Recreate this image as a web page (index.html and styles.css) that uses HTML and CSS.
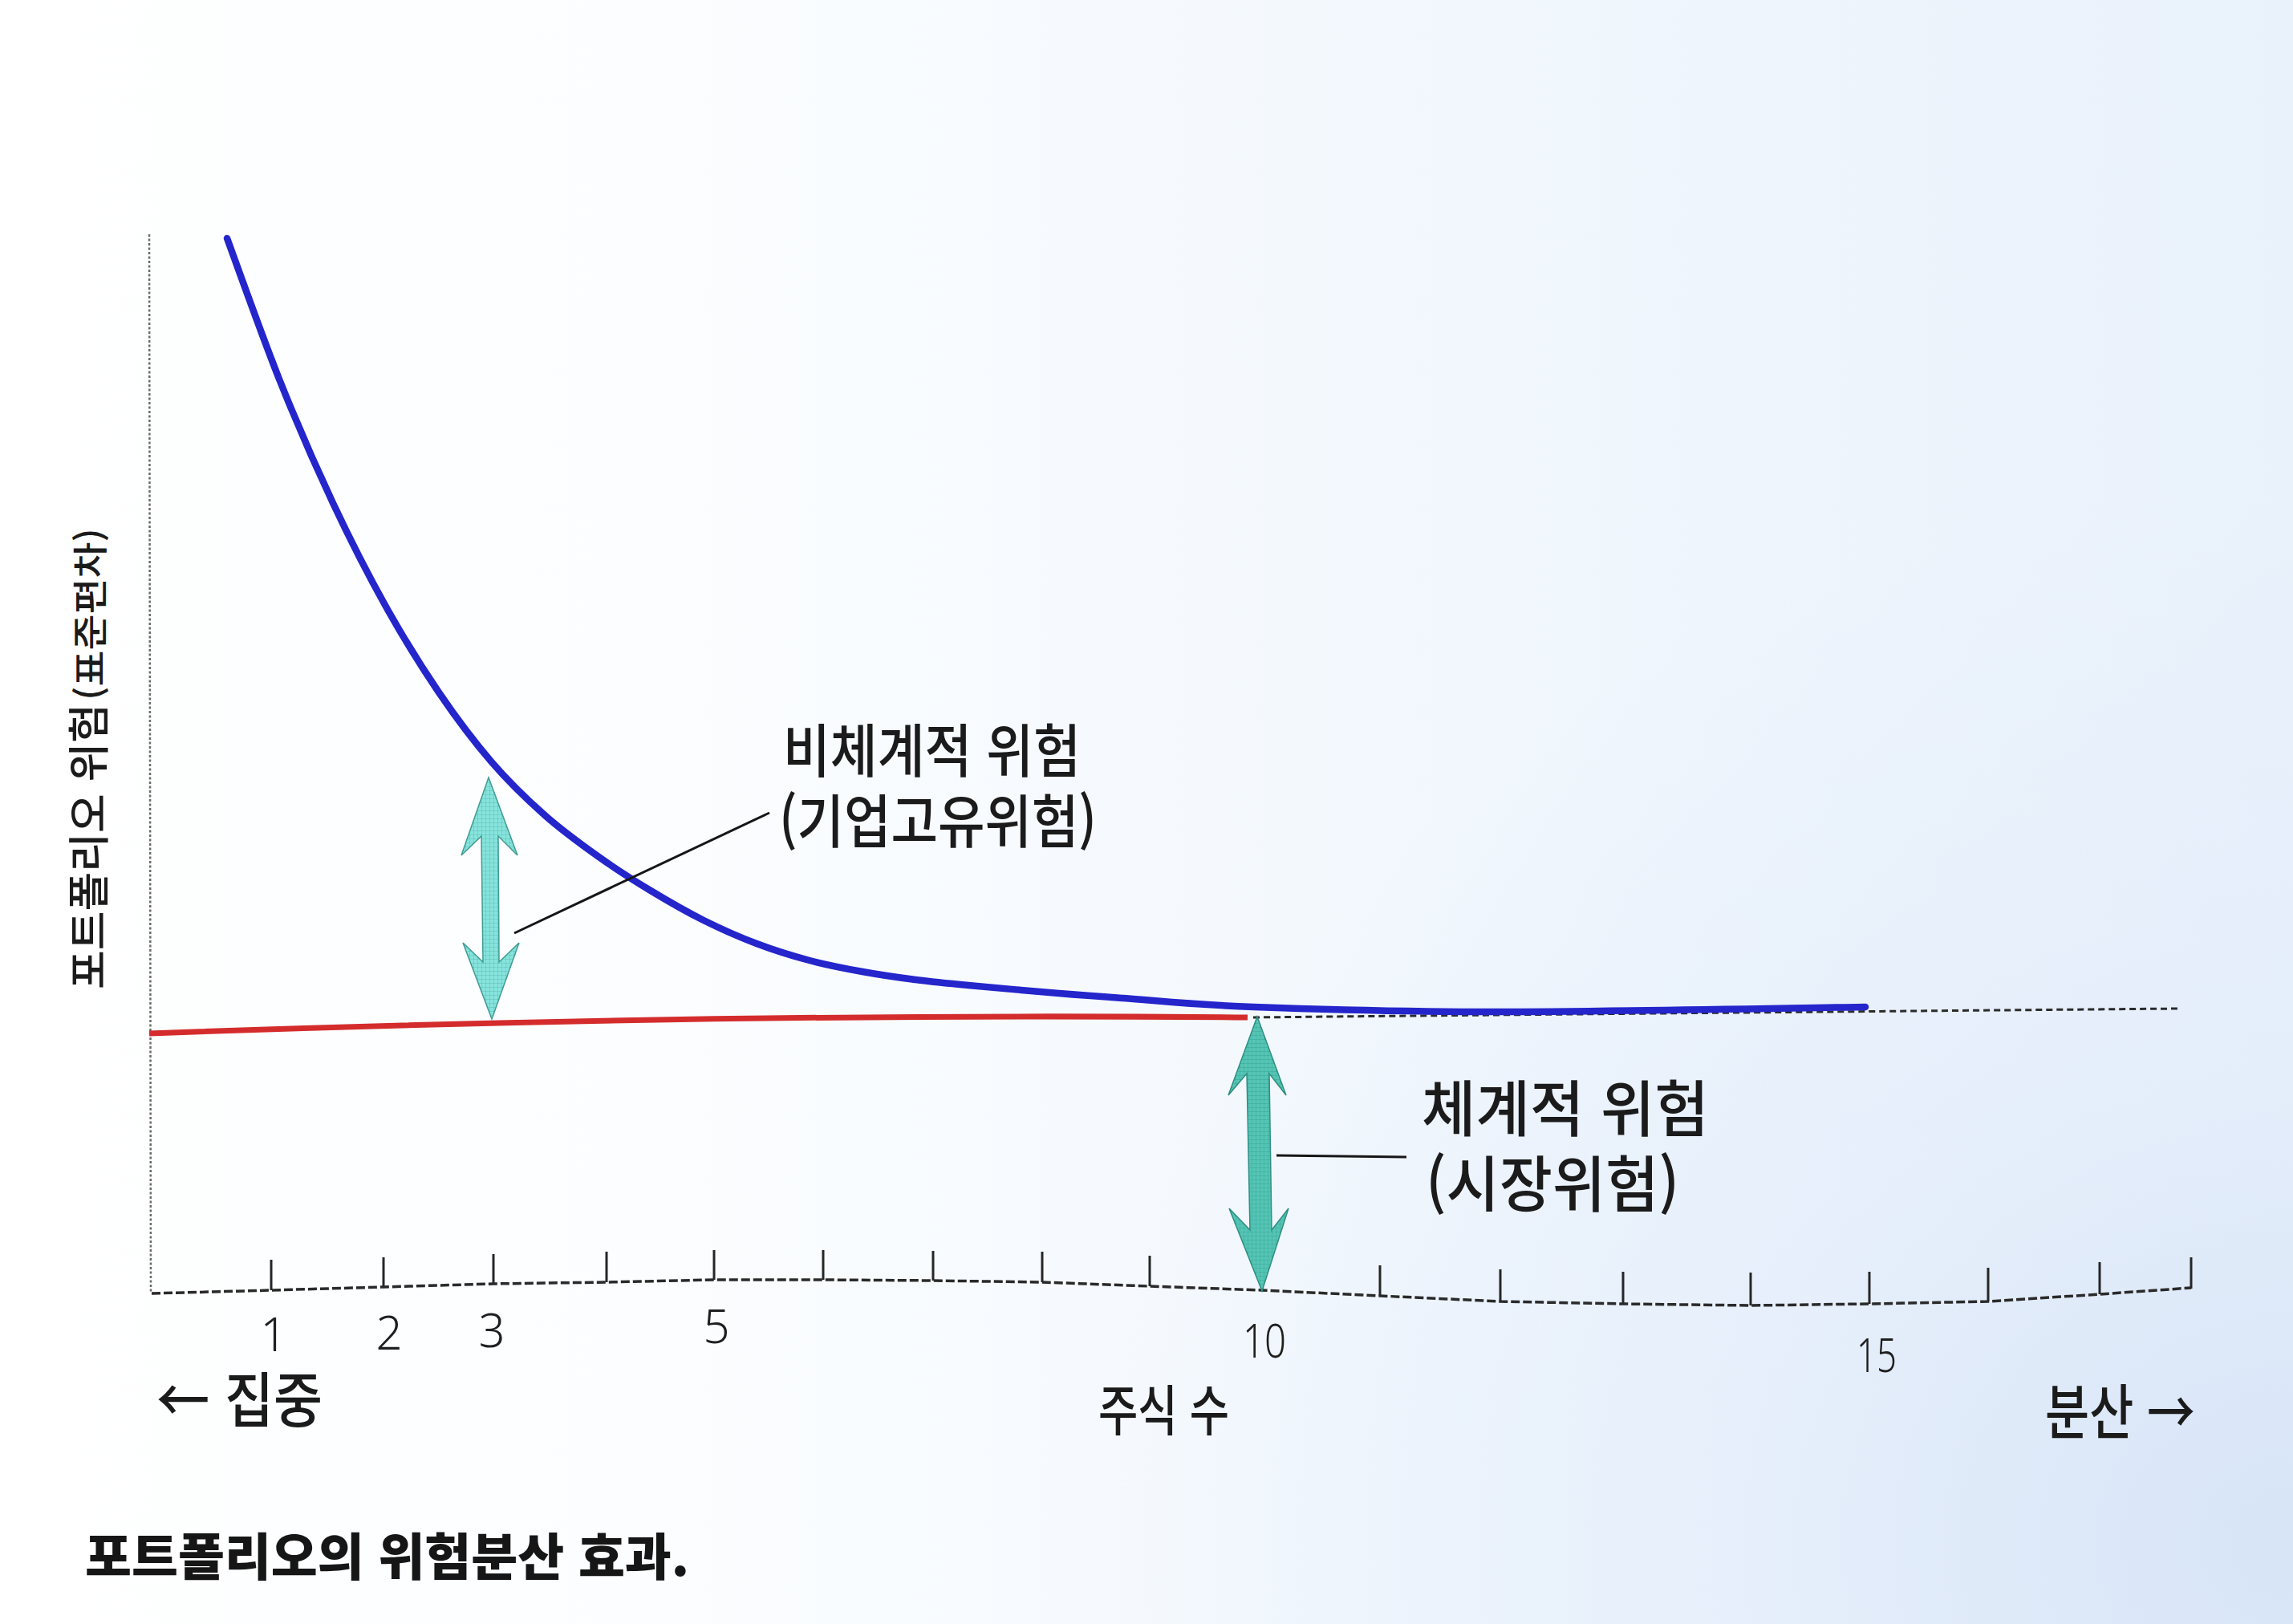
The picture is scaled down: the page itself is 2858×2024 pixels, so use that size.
FILE: index.html
```html
<!DOCTYPE html>
<html lang="ko">
<head>
<meta charset="utf-8">
<title>포트폴리오의 위험분산 효과</title>
<link rel="stylesheet" href="styles.css">
</head>
<body>
<main class="page">
  <figure class="figure">
    <svg class="chart" viewBox="0 0 2858 1880" width="2858" height="1880" xmlns="http://www.w3.org/2000/svg">
      <defs>
        <pattern id="hatchA" width="5" height="5" patternUnits="userSpaceOnUse">
          <rect width="5" height="5" fill="#86e4dc"/>
          <path d="M0 0V5M0 0H5" class="hatch-line"/>
        </pattern>
        <pattern id="hatchB" width="5" height="5" patternUnits="userSpaceOnUse">
          <rect width="5" height="5" fill="#55c6b6"/>
          <path d="M0 0V5M0 0H5" class="hatch-line-b"/>
        </pattern>
      </defs>

      <!-- vertical axis -->
      <line class="axis-y" x1="186" y1="292" x2="188" y2="1612"/>

      <!-- horizontal axis -->
      <polyline class="axis-x" points="189,1612 338,1608 478,1604 615,1600 756,1598 890,1595 1026,1595 1163,1596 1299,1598 1433,1603 1573,1608 1720,1615 1870,1622 2023,1625 2182,1627 2330,1625 2478,1622 2617,1613 2731,1605"/>

      <g class="ticks">
        <line x1="338" y1="1570" x2="338" y2="1608"/>
        <line x1="478" y1="1567" x2="478" y2="1604"/>
        <line x1="615" y1="1563" x2="615" y2="1600"/>
        <line x1="756" y1="1560" x2="756" y2="1598"/>
        <line x1="890" y1="1558" x2="890" y2="1595"/>
        <line x1="1026" y1="1558" x2="1026" y2="1595"/>
        <line x1="1163" y1="1559" x2="1163" y2="1596"/>
        <line x1="1299" y1="1560" x2="1299" y2="1598"/>
        <line x1="1433" y1="1565" x2="1433" y2="1603"/>
        <line x1="1573" y1="1570" x2="1573" y2="1608"/>
        <line x1="1720" y1="1577" x2="1720" y2="1615"/>
        <line x1="1870" y1="1582" x2="1870" y2="1622"/>
        <line x1="2023" y1="1585" x2="2023" y2="1625"/>
        <line x1="2182" y1="1586" x2="2182" y2="1627"/>
        <line x1="2330" y1="1585" x2="2330" y2="1625"/>
        <line x1="2478" y1="1580" x2="2478" y2="1622"/>
        <line x1="2617" y1="1573" x2="2617" y2="1613"/>
        <line x1="2731" y1="1567" x2="2731" y2="1606"/>
      </g>

      <!-- systematic risk (red) -->
      <path class="line-red" d="M186,1288 Q900,1262 1555,1268"/>
      <!-- dashed continuation -->
      <path class="line-dash" d="M1562,1268 Q2150,1262 2716,1257"/>

      <!-- total risk curve (blue) -->
      <path class="line-blue" d="M283,297 C294,326.7 327,420 349,475 C371,530 393,580.2 415,627 C437,673.8 459,716.7 481,756 C503,795.3 525,830.7 547,863 C569,895.3 591,924.5 613,950 C635,975.5 657,996.5 679,1016 C701,1035.5 723,1051.3 745,1067 C767,1082.7 789,1096.7 811,1110 C833,1123.3 855,1136 877,1147 C899,1158 921,1167.7 943,1176 C965,1184.3 987,1191.2 1009,1197 C1031,1202.8 1053,1207 1075,1211 C1097,1215 1119,1218.2 1141,1221 C1163,1223.8 1177.2,1225.2 1207,1228 C1236.8,1230.8 1287.8,1235.3 1320,1238 C1352.2,1240.7 1359.5,1241.2 1400,1244 C1440.5,1246.8 1485.5,1252.2 1563,1255 C1640.5,1257.8 1738,1261 1865,1261 C1992,1261 2248.3,1256 2325,1255"/>

      <!-- leader lines -->
      <line class="leader" x1="641" y1="1163" x2="959" y2="1013"/>
      <line class="leader" x1="1591" y1="1440" x2="1753" y2="1442"/>

      <!-- double arrows -->
      <polygon class="arrow-a" points="609,969 645,1066 621,1042 622,1199 647,1175 613,1270 577,1175 602,1199 600,1042 575,1066"/>
      <polygon class="arrow-b" points="1567,1267 1603,1365 1582,1338 1585,1533 1606,1506 1573,1609 1532,1506 1558,1533 1554,1338 1531,1365"/>

      <!-- labels -->
      <text class="lbl" x="976" y="962" textLength="371" lengthAdjust="spacingAndGlyphs">비체계적 위험</text>
      <text class="lbl" x="971" y="1050" textLength="396" lengthAdjust="spacingAndGlyphs">(기업고유위험)</text>
      <text class="lbl lbl-lg" x="1772" y="1410" textLength="358" lengthAdjust="spacingAndGlyphs">체계적 위험</text>
      <text class="lbl lbl-lg" x="1777" y="1504" textLength="316" lengthAdjust="spacingAndGlyphs">(시장위험)</text>

      <text class="lbl lbl-axis" x="1369" y="1783" textLength="163" lengthAdjust="spacingAndGlyphs">주식 수</text>
      <text class="lbl lbl-end" x="195" y="1772" textLength="207" lengthAdjust="spacingAndGlyphs">← 집중</text>
      <text class="lbl lbl-end" x="2549" y="1787" textLength="187" lengthAdjust="spacingAndGlyphs">분산 →</text>

      <text class="ylbl" transform="translate(130,1233) rotate(-90)" textLength="356" lengthAdjust="spacingAndGlyphs">포트폴리오 위험</text>
      <text class="ylbl ylbl-sm" transform="translate(129,873) rotate(-90)" textLength="215" lengthAdjust="spacingAndGlyphs">(표준편차)</text>

      <g class="nums">
        <text x="341" y="1684">1</text>
        <text x="485" y="1682">2</text>
        <text x="613" y="1679">3</text>
        <text x="893" y="1674">5</text>
        <text x="1576" y="1692" textLength="54" lengthAdjust="spacingAndGlyphs">10</text>
        <text x="2339" y="1710" textLength="50" lengthAdjust="spacingAndGlyphs">15</text>
      </g>
    </svg>
    <figcaption class="caption">포트폴리오의 위험분산 효과.</figcaption>
  </figure>
</main>
</body>
</html>
```

FILE: styles.css
```css
html, body {
  margin: 0;
  padding: 0;
}

body {
  width: 2858px;
  height: 2024px;
  overflow: hidden;
  background:
    radial-gradient(ellipse 1500px 1300px at 100% 95%, rgba(214, 228, 247, 0.95) 0%, rgba(226, 236, 250, 0.7) 45%, rgba(240, 246, 253, 0) 100%),
    linear-gradient(90deg, #ffffff 0%, #fbfdff 30%, #f1f7fd 65%, #e9f1fb 100%);
  font-family: "Noto Sans CJK KR", "Noto Sans", sans-serif;
  color: #1b1b1b;
}

.page {
  width: 2858px;
  height: 2024px;
}

.figure {
  margin: 0;
  display: flex;
  flex-direction: column;
}

.chart {
  display: block;
}

.caption {
  margin-top: 24px;
  padding-left: 106px;
  font-family: "Noto Sans CJK KR", "Noto Sans", sans-serif;
  font-weight: 900;
  font-size: 63px;
  line-height: 63px;
  letter-spacing: 0;
  color: #161616;
}

/* chart strokes */
.axis-y {
  stroke: #6a6a6a;
  stroke-width: 2.5;
  stroke-dasharray: 3 2.5;
}

.axis-x {
  fill: none;
  stroke: #2a2a2a;
  stroke-width: 3.5;
  stroke-dasharray: 11 4;
}

.ticks line {
  stroke: #262626;
  stroke-width: 3;
}

.line-red {
  fill: none;
  stroke: #d42c2c;
  stroke-width: 7;
}

.line-dash {
  fill: none;
  stroke: #2b2b2b;
  stroke-width: 3;
  stroke-dasharray: 8 5;
}

.line-blue {
  fill: none;
  stroke: #2525cc;
  stroke-width: 8.5;
  stroke-linecap: round;
  stroke-linejoin: round;
}

.leader {
  stroke: #161616;
  stroke-width: 3;
}

.hatch-line {
  stroke: #3f9f98;
  stroke-width: 1;
  opacity: 0.55;
  fill: none;
}

.hatch-line-b {
  stroke: #23897a;
  stroke-width: 1;
  opacity: 0.55;
  fill: none;
}

.arrow-a {
  fill: url(#hatchA);
  stroke: #3f9c94;
  stroke-width: 1.5;
}

.arrow-b {
  fill: url(#hatchB);
  stroke: #2f8f82;
  stroke-width: 1.5;
}

/* chart text */
.lbl {
  font-family: "Noto Sans CJK KR", "Noto Sans", sans-serif;
  font-size: 72px;
  font-weight: 500;
  fill: #1b1b1b;
}

.lbl-lg {
  font-size: 76px;
}

.lbl-axis {
  font-size: 68px;
}

.lbl-end {
  font-size: 74px;
}

.ylbl {
  font-family: "Noto Sans CJK KR", "Noto Sans", sans-serif;
  font-size: 52px;
  font-weight: 500;
  fill: #1b1b1b;
}

.ylbl-sm {
  font-size: 44px;
}

.nums text {
  font-family: "Noto Sans", "Open Sans", sans-serif;
  font-size: 58px;
  font-weight: 300;
  text-anchor: middle;
  fill: #1f1f1f;
}
```
